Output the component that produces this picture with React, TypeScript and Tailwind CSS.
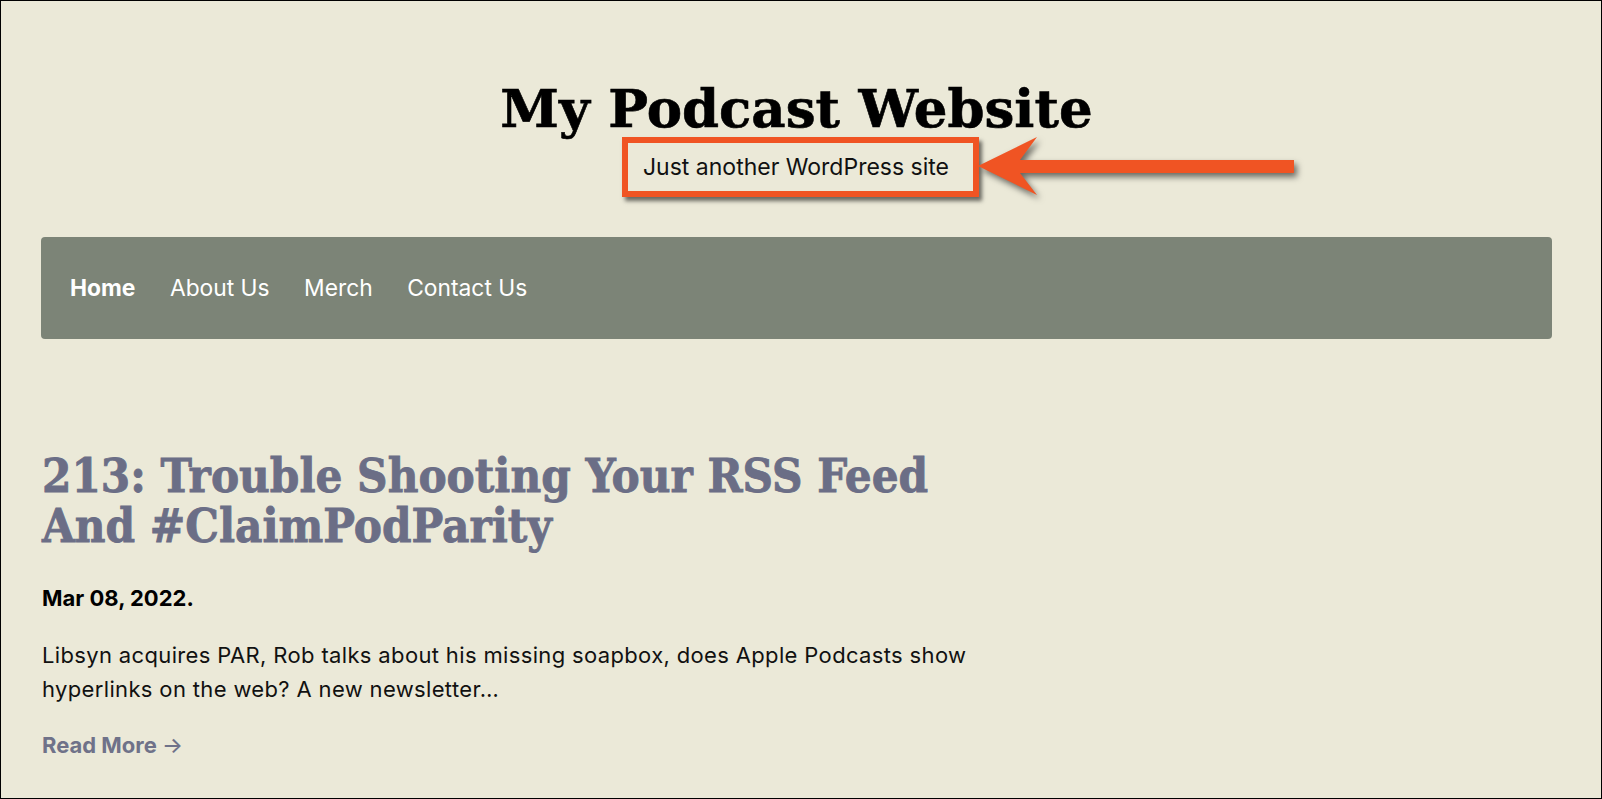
import React from "react";

export default function App() {
  return (
    <div className="w-[1602px] h-[799px] overflow-hidden border border-black bg-[#ebe9d8] font-['Inter',sans-serif]">
      <div className="w-[1511px] ml-[40px]">
        <header className="pt-[81px] flex flex-col items-center">
          <h1 className="font-['DejaVu_Serif',serif] font-bold text-[53px] leading-[53px] text-black [-webkit-text-stroke:0.6px_#000]">
            My Podcast Website
          </h1>
          <div className="relative mt-[2px] ml-[8px]">
            <div className="border-[6px] border-[#f05423] h-[60px] pl-[15px] pr-[24px] text-[23px] leading-[48px] text-[#111] shadow-[3px_4px_4px_rgba(0,0,0,0.55)]">
              Just another WordPress site
            </div>
            <svg
              className="absolute left-[calc(100%-1px)] top-0 drop-shadow-[3px_4px_3px_rgba(0,0,0,0.55)]"
              width="322"
              height="62"
              viewBox="0 0 322 62"
            >
              <path d="M0 29 L59 0 L42 23 L316 23 L316 36 L42 36 L59 58 Z" fill="#f05423" />
            </svg>
          </div>
        </header>

        <nav className="mt-[40px] h-[102px] rounded-[4px] bg-[#7c8477] flex items-center pl-[29px] gap-[34.5px] text-[22.8px] text-white">
          <span className="font-bold">Home</span>
          <span>About Us</span>
          <span>Merch</span>
          <span>Contact Us</span>
        </nav>

        <article className="w-[950px] pt-[112px] pl-[1px]">
          <h2 className="font-['DejaVu_Serif_Condensed','DejaVu_Serif',serif] font-bold text-[47px] leading-[50px] text-[#6b6e86] [-webkit-text-stroke:0.8px_#6b6e86]">
            213: Trouble Shooting Your RSS Feed And #ClaimPodParity
          </h2>
          <p className="mt-[33px] text-[22px] leading-[28px] font-bold text-[#000]">Mar 08, 2022.</p>
          <p className="mt-[26px] text-[22px] leading-[34px] tracking-[0.35px] text-[#111]">
            Libsyn acquires PAR, Rob talks about his missing soapbox, does Apple Podcasts show hyperlinks on the web? A new newsletter…
          </p>
          <p className="mt-[25px] text-[22px] leading-[28px] font-bold text-[#6f7289]">
            Read More <span className="font-medium">→</span>
          </p>
        </article>
      </div>
    </div>
  );
}
